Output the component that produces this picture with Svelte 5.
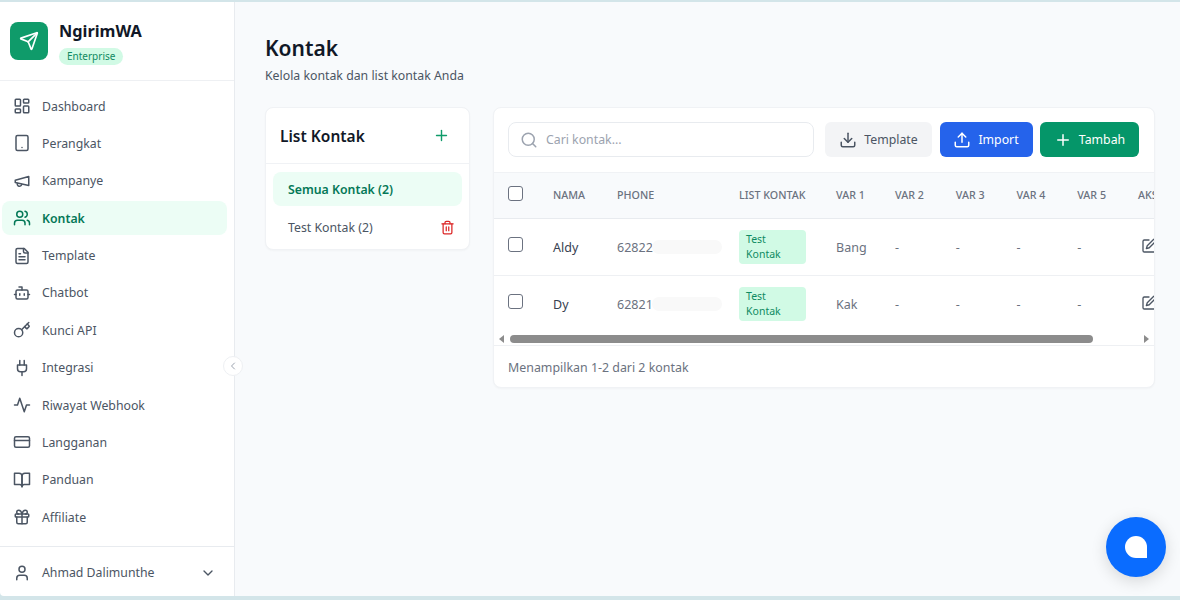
<script>
  const icons = {
    send: '<path d="M14.536 21.686a.5.5 0 0 0 .937-.024l6.5-19a.496.496 0 0 0-.635-.635l-19 6.5a.5.5 0 0 0-.024.937l7.93 3.18a2 2 0 0 1 1.112 1.11z"/><path d="m21.854 2.147-10.94 10.939"/>',
    dashboard: '<rect width="7" height="9" x="3" y="3" rx="1"/><rect width="7" height="5" x="14" y="3" rx="1"/><rect width="7" height="9" x="14" y="12" rx="1"/><rect width="7" height="5" x="3" y="16" rx="1"/>',
    tablet: '<rect width="16" height="20" x="4" y="2" rx="2"/><line x1="12" x2="12.01" y1="18" y2="18"/>',
    megaphone: '<path d="m3 11 18-5v12L3 14v-3z"/><path d="M11.6 16.8a3 3 0 1 1-5.8-1.6"/>',
    users: '<path d="M16 21v-2a4 4 0 0 0-4-4H6a4 4 0 0 0-4 4v2"/><circle cx="9" cy="7" r="4"/><path d="M22 21v-2a4 4 0 0 0-3-3.87"/><path d="M16 3.13a4 4 0 0 1 0 7.75"/>',
    file: '<path d="M15 2H6a2 2 0 0 0-2 2v16a2 2 0 0 0 2 2h12a2 2 0 0 0 2-2V7Z"/><path d="M14 2v4a2 2 0 0 0 2 2h4"/><path d="M10 9H8"/><path d="M16 13H8"/><path d="M16 17H8"/>',
    bot: '<path d="M12 8V4H8"/><rect width="16" height="12" x="4" y="8" rx="2"/><path d="M2 14h2"/><path d="M20 14h2"/><path d="M15 13v2"/><path d="M9 13v2"/>',
    key: '<path d="m15.5 7.5 2.3 2.3a1 1 0 0 0 1.4 0l2.1-2.1a1 1 0 0 0 0-1.4L19 4"/><path d="m21 2-9.6 9.6"/><circle cx="7.5" cy="15.5" r="5.5"/>',
    plug: '<path d="M12 22v-5"/><path d="M9 8V2"/><path d="M15 8V2"/><path d="M18 8v5a4 4 0 0 1-4 4h-4a4 4 0 0 1-4-4V8Z"/>',
    activity: '<path d="M22 12h-4l-3 9L9 3l-3 9H2"/>',
    card: '<rect width="20" height="14" x="2" y="5" rx="2"/><line x1="2" x2="22" y1="10" y2="10"/>',
    book: '<path d="M2 3h6a4 4 0 0 1 4 4v14a3 3 0 0 0-3-3H2z"/><path d="M22 3h-6a4 4 0 0 0-4 4v14a3 3 0 0 1 3-3h7z"/>',
    gift: '<rect x="3" y="8" width="18" height="4" rx="1"/><path d="M12 8v13"/><path d="M19 12v7a2 2 0 0 1-2 2H7a2 2 0 0 1-2-2v-7"/><path d="M7.5 8a2.5 2.5 0 0 1 0-5A4.8 8 0 0 1 12 8a4.8 8 0 0 1 4.5-5 2.5 2.5 0 0 1 0 5"/>',
    user: '<path d="M19 21v-2a4 4 0 0 0-4-4H9a4 4 0 0 0-4 4v2"/><circle cx="12" cy="7" r="4"/>',
    down: '<path d="m6 9 6 6 6-6"/>',
    left: '<path d="m15 18-6-6 6-6"/>',
    plus: '<path d="M5 12h14"/><path d="M12 5v14"/>',
    search: '<circle cx="11" cy="11" r="8"/><path d="m21 21-4.3-4.3"/>',
    download: '<path d="M21 15v4a2 2 0 0 1-2 2H5a2 2 0 0 1-2-2v-4"/><path d="m7 10 5 5 5-5"/><path d="M12 15V3"/>',
    upload: '<path d="M21 15v4a2 2 0 0 1-2 2H5a2 2 0 0 1-2-2v-4"/><path d="m17 8-5-5-5 5"/><path d="M12 3v12"/>',
    trash: '<path d="M3 6h18"/><path d="M19 6v14c0 1-1 2-2 2H7c-1 0-2-1-2-2V6"/><path d="M8 6V4c0-1 1-2 2-2h4c1 0 2 1 2 2v2"/><line x1="10" x2="10" y1="11" y2="17"/><line x1="14" x2="14" y1="11" y2="17"/>',
    pen: '<path d="M12 3H5a2 2 0 0 0-2 2v14a2 2 0 0 0 2 2h14a2 2 0 0 0 2-2v-7"/><path d="M18.375 2.625a1 1 0 0 1 3 3l-9 9L8 16l1.375-4.375z"/>'
  };

  const menu = [
    { label: "Dashboard", icon: "dashboard" },
    { label: "Perangkat", icon: "tablet" },
    { label: "Kampanye", icon: "megaphone" },
    { label: "Kontak", icon: "users", active: true },
    { label: "Template", icon: "file" },
    { label: "Chatbot", icon: "bot" },
    { label: "Kunci API", icon: "key" },
    { label: "Integrasi", icon: "plug" },
    { label: "Riwayat Webhook", icon: "activity" },
    { label: "Langganan", icon: "card" },
    { label: "Panduan", icon: "book" },
    { label: "Affiliate", icon: "gift" }
  ];

  const contacts = [
    { name: "Aldy", phone: "62822", list: "Test Kontak", var1: "Bang" },
    { name: "Dy", phone: "62821", list: "Test Kontak", var1: "Kak" }
  ];
</script>

{#snippet icon(name, size = 18)}
  <svg class="icon" width={size} height={size} viewBox="0 0 24 24" fill="none" stroke="currentColor" stroke-width="2" stroke-linecap="round" stroke-linejoin="round">{@html icons[name]}</svg>
{/snippet}

<div class="shell">
  <aside class="sidebar">
    <div class="brand">
      <div class="logo">{@render icon("send", 20)}</div>
      <div class="brand-text">
        <div class="brand-name">NgirimWA</div>
        <span class="plan">Enterprise</span>
      </div>
    </div>

    <nav class="nav">
      {#each menu as item}
        <div class="nav-item" class:active={item.active}>
          {@render icon(item.icon)}
          <span>{item.label}</span>
        </div>
      {/each}
    </nav>

    <div class="account">
      {@render icon("user")}
      <span class="account-name">Ahmad Dalimunthe</span>
      {@render icon("down", 16)}
    </div>

    <button class="collapse">{@render icon("left", 12)}</button>
  </aside>

  <main class="main">
    <h1>Kontak</h1>
    <p class="subtitle">Kelola kontak dan list kontak Anda</p>

    <div class="columns">
      <section class="card lists">
        <div class="lists-head">
          <h2>List Kontak</h2>
          <span class="add">{@render icon("plus", 17)}</span>
        </div>
        <div class="lists-body">
          <div class="list-row selected">Semua Kontak (2)</div>
          <div class="list-row">
            <span>Test Kontak (2)</span>
            <span class="del">{@render icon("trash", 15)}</span>
          </div>
        </div>
      </section>

      <section class="card contacts">
        <div class="toolbar">
          <div class="search">
            {@render icon("search")}
            <span>Cari kontak...</span>
          </div>
          <button class="btn gray">{@render icon("download")}Template</button>
          <button class="btn blue">{@render icon("upload")}Import</button>
          <button class="btn green">{@render icon("plus")}Tambah</button>
        </div>

        <div class="table-wrap">
          <table>
            <thead>
              <tr>
                <th class="c-check"><span class="check"></span></th>
                <th class="c-name">Nama</th>
                <th class="c-phone">Phone</th>
                <th class="c-list">List Kontak</th>
                <th class="c-var1">Var 1</th>
                <th class="c-var">Var 2</th>
                <th class="c-var">Var 3</th>
                <th class="c-var">Var 4</th>
                <th class="c-var">Var 5</th>
                <th class="c-act">Aksi</th>
              </tr>
            </thead>
            <tbody>
              {#each contacts as c}
                <tr>
                  <td><span class="check"></span></td>
                  <td class="name">{c.name}</td>
                  <td class="phone">{c.phone}<span class="smudge"></span></td>
                  <td><span class="tag">{c.list}</span></td>
                  <td>{c.var1}</td>
                  <td>-</td>
                  <td>-</td>
                  <td>-</td>
                  <td>-</td>
                  <td class="act">{@render icon("pen", 16)}</td>
                </tr>
              {/each}
            </tbody>
          </table>
        </div>

        <div class="scrollbar">
          <span class="arrow arrow-left"></span>
          <span class="thumb"></span>
          <span class="arrow arrow-right"></span>
        </div>

        <div class="table-foot">Menampilkan 1-2 dari 2 kontak</div>
      </section>
    </div>
  </main>

  <button class="fab"><span class="bubble"></span></button>
</div>

<style>
  :global(body) {
    background: #d3e5e9;
    overflow: hidden;
  }

  .shell {
    position: relative;
    display: flex;
    box-sizing: border-box;
    height: 600px;
    padding: 2px 0 4px;
    font-family: "Noto Sans", "Open Sans", sans-serif;
    color: #4b5563;
    font-size: 12.3px;
  }

  .icon {
    flex: none;
    display: block;
  }

  .sidebar {
    position: relative;
    flex: none;
    display: flex;
    flex-direction: column;
    box-sizing: border-box;
    width: 235px;
    background: #fff;
    border-right: 1px solid #e8ebef;
    border-bottom-left-radius: 4px;
  }

  .brand {
    display: flex;
    align-items: flex-start;
    gap: 11px;
    box-sizing: border-box;
    height: 79px;
    padding: 20px 10px 0;
    border-bottom: 1px solid #eef0f3;
  }

  .logo {
    display: flex;
    align-items: center;
    justify-content: center;
    width: 38px;
    height: 38px;
    border-radius: 8px;
    background: #0f9b6a;
    color: #fff;
  }

  .brand-text {
    margin-top: -2px;
  }

  .brand-name {
    font-size: 16.3px;
    line-height: 22px;
    font-weight: 700;
    color: #111827;
  }

  .plan {
    display: block;
    width: fit-content;
    margin-top: 6px;
    padding: 0 8px;
    border-radius: 9px;
    background: #d1fae5;
    color: #0f8a62;
    font-size: 10px;
    line-height: 17px;
  }

  .nav {
    flex: 1;
    display: flex;
    flex-direction: column;
    gap: 3.38px;
    padding: 8px 7px 0 2px;
  }

  .nav-item {
    display: flex;
    align-items: center;
    gap: 11px;
    height: 34px;
    padding-left: 11px;
    border-radius: 8px;
    color: #4b5563;
  }

  .nav-item.active {
    background: #ecfdf5;
    color: #047857;
    font-weight: 600;
  }

  .account {
    display: flex;
    align-items: center;
    gap: 11px;
    box-sizing: border-box;
    height: 50px;
    padding: 2px 18px 0 13px;
    border-top: 1px solid #e8ebef;
  }

  .account-name {
    flex: 1;
  }

  .collapse {
    position: absolute;
    top: 354px;
    right: -9px;
    display: flex;
    align-items: center;
    justify-content: center;
    width: 20px;
    height: 20px;
    padding: 0;
    border: 1px solid #eef0f3;
    border-radius: 50%;
    background: #fff;
    color: #9ca3af;
  }

  .main {
    flex: 1;
    min-width: 0;
    box-sizing: border-box;
    padding: 30px 25px 0 30px;
    background: #f8fafc;
  }

  h1 {
    margin: 0;
    font-size: 21px;
    line-height: 32px;
    font-weight: 600;
    color: #111827;
  }

  .subtitle {
    margin: 2px 0 0;
    line-height: 20px;
    color: #4b5563;
  }

  .columns {
    display: flex;
    align-items: flex-start;
    gap: 23px;
    margin-top: 21px;
  }

  .card {
    box-sizing: border-box;
    background: #fff;
    border: 1px solid #f0f2f5;
    border-radius: 8px;
    box-shadow: 0 1px 2px rgba(0, 0, 0, 0.03);
  }

  .lists {
    flex: none;
    width: 205px;
    height: 143px;
  }

  .lists-head {
    display: flex;
    align-items: center;
    justify-content: space-between;
    box-sizing: border-box;
    height: 56px;
    padding: 0 19px 0 14px;
    border-bottom: 1px solid #f0f2f5;
  }

  h2 {
    margin: 0;
    font-size: 15.5px;
    font-weight: 600;
    color: #111827;
  }

  .add {
    color: #0f9b6a;
  }

  .lists-body {
    display: flex;
    flex-direction: column;
    gap: 4px;
    padding: 8px 7px 0;
  }

  .list-row {
    display: flex;
    align-items: center;
    justify-content: space-between;
    height: 34px;
    padding: 0 7px 0 15px;
    border-radius: 8px;
  }

  .list-row.selected {
    background: #ecfdf5;
    color: #047857;
    font-weight: 600;
  }

  .del {
    color: #dc2626;
  }

  .contacts {
    flex: 1;
    min-width: 0;
    height: 281px;
    overflow: hidden;
  }

  .toolbar {
    display: flex;
    align-items: center;
    gap: 7.5px;
    padding: 14px 15px 15px 14px;
  }

  .search {
    flex: 1;
    display: flex;
    align-items: center;
    gap: 8px;
    height: 35px;
    margin-right: 3.5px;
    padding: 0 11px;
    border: 1px solid #e8ebef;
    border-radius: 8px;
    box-sizing: border-box;
    color: #9ca3af;
  }

  .btn {
    display: flex;
    align-items: center;
    justify-content: center;
    gap: 7px;
    height: 35px;
    padding: 0;
    border: none;
    border-radius: 6px;
    font-family: inherit;
    font-size: 12.3px;
  }

  .gray {
    width: 107px;
    background: #f3f4f6;
    color: #4b5563;
  }

  .blue {
    width: 93px;
    background: #2563eb;
    color: #fff;
  }

  .green {
    width: 99px;
    background: #059669;
    color: #fff;
  }

  .table-wrap {
    overflow: hidden;
  }

  table {
    width: 704px;
    table-layout: fixed;
    border-collapse: collapse;
  }

  th {
    height: 43px;
    padding: 0 0 2px;
    background: #f8fafc;
    border-top: 1px solid #f0f2f5;
    border-bottom: 1px solid #e8ebef;
    color: #6b7280;
    font-size: 10.7px;
    font-weight: 500;
    text-align: left;
    text-transform: uppercase;
    white-space: nowrap;
  }

  .c-check { width: 45px; padding-left: 14px; }
  .c-name { width: 64px; }
  .c-phone { width: 122px; }
  .c-list { width: 97px; }
  .c-var1 { width: 59px; }
  .c-var { width: 60.7px; }
  .c-act { width: 60px; }

  td {
    height: 56px;
    padding: 0;
    border-bottom: 1px solid #eef0f3;
    color: #6b7280;
    font-size: 12.5px;
  }

  td:first-child {
    padding-left: 14px;
  }

  tbody tr:last-child td {
    border-bottom: none;
  }

  td.name {
    color: #374151;
  }

  td.phone {
    position: relative;
  }

  .smudge {
    position: absolute;
    top: 21px;
    left: 35px;
    width: 70px;
    height: 14px;
    border-radius: 7px;
    background: #f9f9f9;
  }

  .check {
    display: block;
    box-sizing: border-box;
    width: 15px;
    height: 15px;
    border: 1.5px solid #6b7280;
    border-radius: 3px;
    background: #fff;
  }

  th .check {
    margin-top: -2px;
  }

  td .check {
    margin-top: -6px;
  }

  .tag {
    display: block;
    box-sizing: border-box;
    width: 67px;
    margin-top: -1px;
    padding: 2px 7px;
    border-radius: 4px;
    background: #d1fae5;
    color: #0f8a62;
    font-size: 10.5px;
    line-height: 15px;
  }

  td.act {
    color: #4b5563;
  }

  td.act :global(svg) {
    margin: -2px 0 0 3px;
  }

  .scrollbar {
    display: flex;
    align-items: center;
    justify-content: space-between;
    box-sizing: border-box;
    height: 14px;
    padding: 0 5px;
    border-bottom: 1px solid #eef0f3;
  }

  .thumb {
    width: 583px;
    height: 8px;
    margin-right: 46px;
    border-radius: 4px;
    background: #8c8c8c;
  }

  .arrow {
    width: 0;
    height: 0;
    border-top: 4px solid transparent;
    border-bottom: 4px solid transparent;
  }

  .arrow-left {
    border-right: 5px solid #8c8c8c;
  }

  .arrow-right {
    border-left: 5px solid #8c8c8c;
  }

  .table-foot {
    padding: 13px 14px 0;
    font-size: 12.4px;
    line-height: 18px;
    color: #6b7280;
  }

  .fab {
    position: absolute;
    left: 1106px;
    top: 517px;
    display: flex;
    align-items: center;
    justify-content: center;
    width: 60px;
    height: 60px;
    padding: 0;
    border: none;
    border-radius: 50%;
    background: #0a6cff;
    box-shadow: 0 4px 16px rgba(0, 0, 0, 0.14);
  }

  .bubble {
    display: block;
    width: 22px;
    height: 22px;
    border-radius: 50% 50% 0 50%;
    background: #fff;
  }
</style>
